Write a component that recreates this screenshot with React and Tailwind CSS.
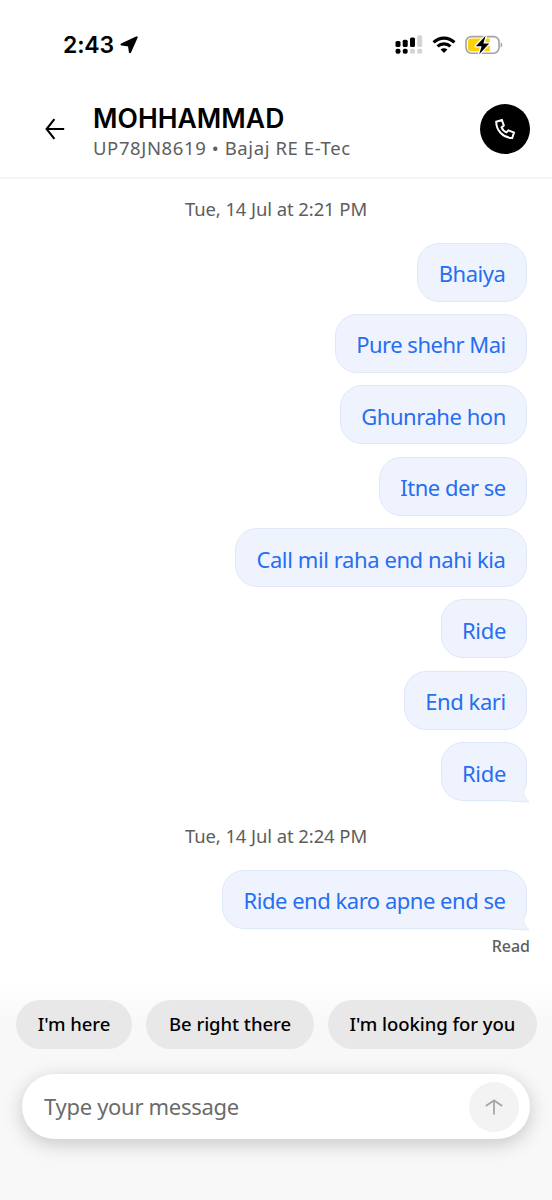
import React, { useState } from "react";

const firstBatch = [
  { text: "Bhaiya", size: "w-[110px] tracking-[-0.5px]" },
  { text: "Pure shehr Mai", size: "w-[192px] tracking-[-0.5px]" },
  { text: "Ghunrahe hon", size: "w-[187px] tracking-[-0.45px]" },
  { text: "Itne der se", size: "w-[148px] tracking-[-0.5px]" },
  { text: "Call mil raha end nahi kia", size: "w-[292px] tracking-[-0.4px]" },
  { text: "Ride", size: "w-[86px] tracking-[-0.3px]" },
  { text: "End kari", size: "w-[123px] tracking-[-0.45px]" },
  { text: "Ride", size: "w-[86px] tracking-[-0.3px]", tail: true },
];

const quickReplies = [
  { text: "I'm here", size: "w-[116px]" },
  { text: "Be right there", size: "w-[168px]" },
  { text: "I'm looking for you", size: "w-[209px]" },
];

function StatusBar() {
  return (
    <div className="flex h-[90px] items-center justify-between pl-[63px] pr-[49px]">
      <div className="flex items-center gap-[6px] font-['Inter',sans-serif]">
        <span className="text-[23px] font-semibold leading-none tracking-[-0.2px]">2:43</span>
        <svg width="18" height="18" viewBox="0 0 18 18">
          <path
            d="M16.6 1.4 L10 16 L9 9.3 L1.6 8.5 Z"
            fill="#000"
            stroke="#000"
            strokeWidth="2.2"
            strokeLinejoin="round"
          />
        </svg>
      </div>
      <div className="flex items-center gap-[9px]">
        <svg width="28" height="20" viewBox="0 0 28 20">
          <rect x="0.5" y="6" width="5" height="6" rx="1.6" />
          <rect x="7.7" y="4.7" width="5" height="7.3" rx="1.6" />
          <rect x="15" y="2.5" width="5" height="9.5" rx="1.6" />
          <rect x="22.2" y="0.3" width="5" height="11.7" rx="1.6" fill="#d4d4d4" />
          <rect x="0.5" y="13.8" width="5" height="5" rx="2" />
          <rect x="7.7" y="13.8" width="5" height="5" rx="2" />
          <rect x="15" y="13.8" width="5" height="5" rx="2" fill="#d4d4d4" />
          <rect x="22.2" y="13.8" width="5" height="5" rx="2" fill="#d4d4d4" />
        </svg>
        <svg width="24" height="18" viewBox="0 0 24 18" fill="none" stroke="#000" strokeWidth="3.2">
          <path d="M1.6 6.4 C7.4 0.6 16.6 0.6 22.4 6.4" />
          <path d="M5.6 10.4 C9.2 6.9 14.8 6.9 18.4 10.4" />
          <path d="M12 17 L8.6 13.5 C10.5 11.8 13.5 11.8 15.4 13.5 Z" fill="#000" stroke="none" />
        </svg>
        <svg width="38" height="22" viewBox="0 0 38 22">
          <rect x="1" y="2.6" width="33" height="16.6" rx="5.4" fill="#fff" stroke="#a3a3a3" strokeWidth="1.6" />
          <path d="M6 4.6 H24.8 V17.2 H6 A3 3 0 0 1 3 14.2 V7.6 A3 3 0 0 1 6 4.6 Z" fill="#fdd00a" />
          <path d="M35.6 8.4 C37.8 9 37.8 12.8 35.6 13.4 Z" fill="#a3a3a3" />
          <path
            d="M20.6 1.8 L10.8 12.2 H16.6 L14.2 20.2 L24.2 9.6 H18.4 Z"
            fill="#000"
            stroke="#fff"
            strokeWidth="2.6"
            strokeLinejoin="round"
            paintOrder="stroke"
          />
        </svg>
      </div>
    </div>
  );
}

function Header() {
  return (
    <header className="flex h-[89px] items-start border-b-2 border-[#f5f5f5] pl-[45px] pr-[22px]">
      <button type="button" aria-label="Back" className="mt-[28px]">
        <svg width="20" height="22" viewBox="0 0 20 22" fill="none" stroke="#000" strokeWidth="2.1">
          <path d="M19.2 11 H1.6 M9.4 1.2 L1.6 11 L9.4 20.8" />
        </svg>
      </button>
      <div className="ml-[28px] flex-1">
        <h1 className="mt-[12px] whitespace-nowrap font-['Inter',sans-serif] text-[26.5px] font-semibold leading-[32px] tracking-[0.05px]">
          MOHHAMMAD
        </h1>
        <p className="mt-[1px] whitespace-nowrap text-[18.5px] leading-[26px] tracking-[0.6px] text-[#5e5e5e]">
          UP78JN8619 • Bajaj RE E-Tec
        </p>
      </div>
      <button
        type="button"
        aria-label="Call"
        className="mt-[14px] flex h-[50px] w-[50px] items-center justify-center rounded-full bg-black"
      >
        <svg width="22" height="22" viewBox="0 0 22 22" fill="none" stroke="#fff" strokeWidth="2">
          <path d="M2.2 3.7 L7.9 2 L9.8 7.5 L7.6 9.4 C8.4 11.7 10 13.4 12.4 14.4 L14.4 12.4 L20 14.5 L18.2 20 C9.6 20 2.2 12.8 2.2 3.7 Z" />
        </svg>
      </button>
    </header>
  );
}

function Bubble({ text, size, tail }) {
  return (
    <div
      className={`relative flex h-[59px] items-center justify-center rounded-[22px] border border-[#dfe8fb] bg-[#eff3fe] pt-[3px] text-[22px] text-[#276ef1] ${size}`}
    >
      <span className="whitespace-nowrap">{text}</span>
      {tail && (
        <svg className="absolute -bottom-[4px] -right-[4px]" width="25" height="24" viewBox="0 0 25 24">
          <path
            d="M0 20 L20 0 H21.5 V2 C21.5 7 18.5 9 18.5 13 C19 17 21.5 19 24 22 Q12 21.8 0 20.8 Z"
            fill="#eff3fe"
          />
          <path
            d="M21.5 0 V2 C21.5 7 18.5 9 18.5 13 C19 17 21.5 19 24 22 Q12 21.8 0 20.6"
            fill="none"
            stroke="#dfe8fb"
          />
        </svg>
      )}
    </div>
  );
}

function Timestamp({ children }) {
  return (
    <p className="text-center text-[18.5px] leading-[26px] tracking-[-0.1px] text-[#5e5e5e]">{children}</p>
  );
}

export default function App() {
  const [message, setMessage] = useState("");

  return (
    <div className="flex h-[1200px] w-[552px] flex-col overflow-hidden bg-white font-['Noto_Sans',sans-serif] text-black">
      <StatusBar />
      <Header />

      <main className="flex flex-1 flex-col pt-[17px]">
        <Timestamp>Tue, 14 Jul at 2:21 PM</Timestamp>
        <div className="mt-[20.5px] flex flex-col items-end gap-[12.4px] pr-[25px]">
          {firstBatch.map((item, i) => (
            <Bubble key={i} {...item} />
          ))}
        </div>
        <div className="mt-[22px]">
          <Timestamp>Tue, 14 Jul at 2:24 PM</Timestamp>
        </div>
        <div className="mt-[20.5px] flex flex-col items-end pr-[25px]">
          <Bubble text="Ride end karo apne end se" size="w-[305px] tracking-[-0.48px]" tail />
        </div>
        <p className="mt-[6px] pr-[22px] text-right text-[16px] font-medium leading-[22px] text-[#5e5e5e]">Read</p>
      </main>

      <footer className="flex h-[220px] flex-col bg-linear-to-b from-white to-[#f8f8f8] to-20% pt-[20px]">
        <div className="flex gap-[14px] pl-[16px]">
          {quickReplies.map((reply) => (
            <button
              key={reply.text}
              type="button"
              className={`h-[49px] shrink-0 whitespace-nowrap rounded-full bg-[#e8e8e8] pb-[2px] text-[18.5px] font-medium tracking-[-0.05px] ${reply.size}`}
            >
              {reply.text}
            </button>
          ))}
        </div>
        <div className="mx-[22px] mt-[25px] flex h-[65px] items-center rounded-full bg-white pl-[22px] pr-[11px] shadow-[0_5px_20px_rgba(0,0,0,0.2)]">
          <input
            className="min-w-0 flex-1 bg-transparent text-[22px] tracking-[-0.3px] outline-none placeholder:text-[#6b6b6b]"
            placeholder="Type your message"
            value={message}
            onChange={(e) => setMessage(e.target.value)}
          />
          <button
            type="button"
            aria-label="Send"
            className="flex h-[50px] w-[50px] items-center justify-center rounded-full bg-[#f3f3f3]"
          >
            <svg width="18" height="16" viewBox="0 0 18 16" fill="none" stroke="#a6a6a6" strokeWidth="1.8">
              <path d="M9 15.5 V1.4 M0.8 7 L9 1.4 L17.2 7" />
            </svg>
          </button>
        </div>
      </footer>
    </div>
  );
}
